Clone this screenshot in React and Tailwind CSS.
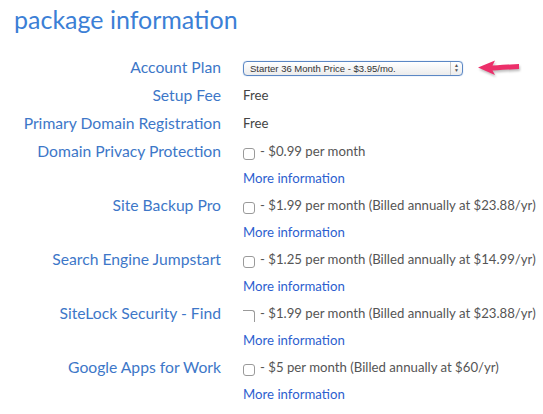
import React from 'react';

const options = [
  { label: 'Domain Privacy Protection', price: '- $0.99 per month' },
  { label: 'Site Backup Pro', price: '- $1.99 per month (Billed annually at $23.88/yr)' },
  { label: 'Search Engine Jumpstart', price: '- $1.25 per month (Billed annually at $14.99/yr)' },
  { label: 'SiteLock Security - Find', price: '- $1.99 per month (Billed annually at $23.88/yr)', broken: true },
  { label: 'Google Apps for Work', price: '- $5 per month (Billed annually at $60/yr)' },
];

const Arrow = () => (
  <svg width="46" height="18" viewBox="0 0 46 18" className="ml-[14px] drop-shadow-[1px_2px_1px_rgba(0,0,0,0.25)]">
    <path d="M1 8.5 L18 1.5 L15.5 6.5 C24 6 32 5.5 42 5 L42 10 C32 10.5 24 11 15.5 11.5 L18 16 Z" fill="#ec2f6a" />
  </svg>
);

const App = () => {
  return (
    <div className="w-[543px] h-[414px] bg-white overflow-hidden font-['Lato','Open_Sans',sans-serif]">
      <h1 className="pl-[14px] pt-[2px] text-[25px] leading-[34px] text-[#3c7fd6]">package information</h1>

      <div className="grid grid-cols-[221px_1fr] gap-x-[22px] mt-[18px]">
        <div className="h-[28px] flex items-center justify-end text-[15.7px] text-[#3d77c8]">Account Plan</div>
        <div className="h-[28px] flex items-center">
          <div className="w-[220px] h-[15px] rounded-[4px] border border-[#5b87c4] bg-gradient-to-b from-white to-[#ececec] shadow-[0_0_1px_#7aa3dc] flex items-center">
            <span className="flex-1 pl-[6px] text-[9.5px] leading-[13px] text-[#333] font-['Liberation_Sans',sans-serif]">
              Starter 36 Month Price - $3.95/mo.
            </span>
            <span className="w-[12px] h-full border-l border-[#c8c8c8] flex flex-col items-center justify-center text-[5px] leading-[5px] text-[#555]">
              <span>▲</span>
              <span>▼</span>
            </span>
          </div>
          <Arrow />
        </div>

        <div className="h-[28px] flex items-center justify-end text-[15.7px] text-[#3d77c8]">Setup Fee</div>
        <div className="h-[28px] flex items-center text-[13.2px] text-[#444]">Free</div>

        <div className="h-[28px] flex items-center justify-end text-[15.7px] text-[#3d77c8] whitespace-nowrap">Primary Domain Registration</div>
        <div className="h-[28px] flex items-center text-[13.2px] text-[#444]">Free</div>

        {options.map((opt, i) => (
          <React.Fragment key={i}>
            <div className="h-[28px] flex items-center justify-end text-[15.7px] text-[#3d77c8] whitespace-nowrap">{opt.label}</div>
            <div className="h-[28px] flex items-center text-[13.2px] text-[#555] whitespace-nowrap">
              {opt.broken ? (
                <span className="w-[12px] h-[12px] mt-[3px] mr-[5px] rounded-tr-[3px] border-t border-r border-[#9a9a9a] border-b-transparent border-l-[#e6e6e6] bg-white shrink-0" />
              ) : (
                <span className="w-[12px] h-[12px] mt-[3px] mr-[5px] rounded-[3px] border border-[#9a9a9a] bg-white shrink-0" />
              )}
              {opt.price}
            </div>
            <div className="h-[26px]" />
            <div className="h-[26px] flex items-center text-[13.2px] text-[#2d5fcf]">More information</div>
          </React.Fragment>
        ))}
      </div>
    </div>
  );
};

export default App;
